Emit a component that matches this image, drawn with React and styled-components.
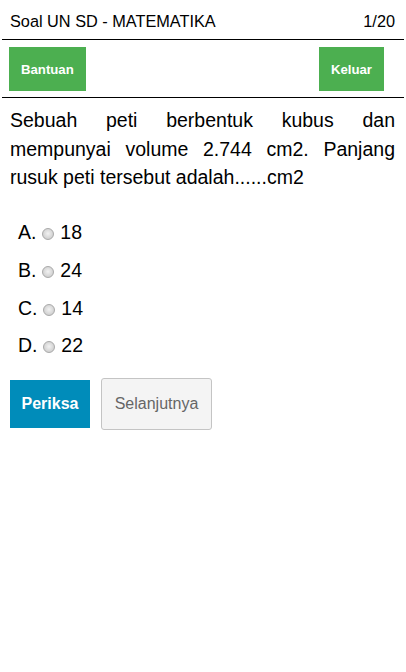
import React from "react";
import styled, { createGlobalStyle } from "styled-components";

const Global = createGlobalStyle`
  html, body { margin: 0; padding: 0; background: #fff; }
  body { font-family: "Liberation Sans", Arial, sans-serif; color: #000; }
`;

const Page = styled.div`
  width: 406px;
  min-height: 672px;
  display: flex;
  flex-direction: column;
`;

const Header = styled.div`
  display: flex;
  justify-content: space-between;
  padding: 12px 11px 9px 10px;
  font-size: 16.3px;
  line-height: 18px;
`;

const Rule = styled.div`
  height: 1px;
  background: #000;
  margin: 0 2px;
`;

const Toolbar = styled.div`
  display: flex;
  justify-content: space-between;
  padding: 7px 22px 6px 9px;
`;

const GreenButton = styled.button`
  height: 44px;
  padding: 0 12px;
  border: none;
  background: #4caf50;
  color: #fff;
  font-family: "Liberation Sans", Arial, sans-serif;
  font-weight: bold;
  font-size: 13.2px;
  cursor: pointer;
`;

const Question = styled.p`
  margin: 0;
  padding: 8px 11px 0 10px;
  font-size: 19.5px;
  line-height: 28.5px;
  text-align: justify;
`;

const Options = styled.div`
  display: flex;
  flex-direction: column;
  margin-top: 22.5px;
  padding-left: 18px;
`;

const Option = styled.label`
  display: block;
  font-size: 19.5px;
  line-height: 37.8px;
  height: 37.8px;
  white-space: pre;
`;

const Radio = styled.span`
  display: inline-block;
  width: 12px;
  height: 12px;
  margin-right: 1px;
  box-sizing: border-box;
  border-radius: 50%;
  border: 1px solid #a9a9a9;
  background: radial-gradient(circle at 50% 45%, #f2f2f2 0%, #d6d6d6 60%, #c4c4c4 100%);
  vertical-align: -1px;
`;

const Actions = styled.div`
  display: flex;
  align-items: center;
  gap: 11px;
  padding-left: 10px;
  margin-top: 13px;
`;

const BlueButton = styled.button`
  height: 48px;
  width: 80px;
  padding: 0;
  border: none;
  background: #008cba;
  color: #fff;
  font-family: "Liberation Sans", Arial, sans-serif;
  font-weight: bold;
  font-size: 16px;
`;

const GreyButton = styled.button`
  height: 52px;
  width: 111px;
  padding: 0;
  border: 1px solid #c4c4c4;
  border-radius: 3px;
  background: #f4f4f4;
  color: #666;
  font-family: "Liberation Sans", Arial, sans-serif;
  font-size: 16px;
`;

const options = [
  ["A.", "18"],
  ["B.", "24"],
  ["C.", "14"],
  ["D.", "22"],
];

export default function App() {
  return (
    <Page>
      <Global />
      <Header>
        <span>Soal UN SD - MATEMATIKA</span>
        <span>1/20</span>
      </Header>
      <Rule />
      <Toolbar>
        <GreenButton>Bantuan</GreenButton>
        <GreenButton>Keluar</GreenButton>
      </Toolbar>
      <Rule />
      <Question>
        Sebuah peti berbentuk kubus dan mempunyai volume 2.744 cm2. Panjang
        rusuk peti tersebut adalah......cm2
      </Question>
      <Options>
        {options.map(([k, v]) => (
          <Option key={k}>
            {k} <Radio /> {v}
          </Option>
        ))}
      </Options>
      <Actions>
        <BlueButton>Periksa</BlueButton>
        <GreyButton>Selanjutnya</GreyButton>
      </Actions>
    </Page>
  );
}
